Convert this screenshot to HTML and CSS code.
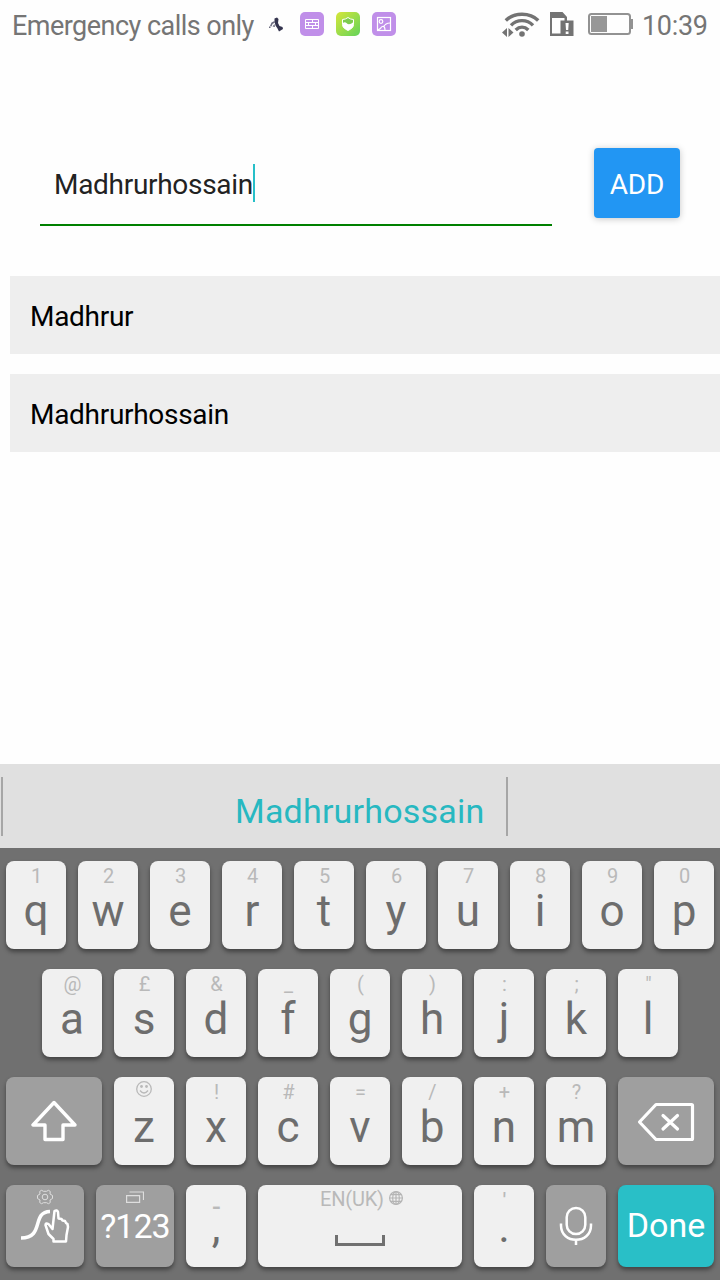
FILE: index.html
```html
<!DOCTYPE html>
<html lang="en">
<head>
<meta charset="utf-8">
<title>Names</title>
<link rel="stylesheet" href="styles.css">
</head>
<body>
<div class="screen">
  <header class="status">
    <span class="carrier">Emergency calls only</span>
    <svg class="n-runner" width="14" height="16" viewBox="0 0 14 16"><path d="M5.500 1.500L8 .5l1.500 1.500-.5 4 1.500 3 3 1 .5 2-4 2.500-1.500-3-2-3-1-4z" fill="#34344e"/><path d="M1 9l1.500-3.500L5.500 4l.5 1.500-2.500 1.500-1 2.500zM5.500 7l.5 3-2.500-.5zM0 9.500h1.500v1.500H0z" fill="#6c6c80"/></svg>
    <svg class="n-app" width="24" height="24" viewBox="0 0 24 24"><rect width="24" height="24" rx="5" fill="#c08fe9"/><path d="M5.500 7.500h13v9h-13zM5.500 10.500h13M5.500 13.500h13M12.500 7.500v3M8.500 10.500v3M15.500 10.500v3M12.500 13.500v3" fill="none" stroke="#fff"/></svg>
    <svg class="n-app" width="24" height="24" viewBox="0 0 24 24"><defs><linearGradient id="lime" x1="0" y1="0" x2="1" y2="1"><stop offset="0" stop-color="#d6e63b"/><stop offset="1" stop-color="#62d35a"/></linearGradient></defs><rect width="24" height="24" rx="5" fill="url(#lime)"/><path d="M6.500 7.500q3 0 5.500-2 2.500 2 5.500 2v5c0 3-2.500 4.500-5.500 6-3-1.500-5.500-3-5.500-6z" fill="#7dcc50" stroke="#fff"/><path d="M6.500 11.500q2-2 4-.5 2.500 3 7-1v2.500c0 3-2.500 4.500-5.500 6-3-1.500-5.500-3-5.500-6z" fill="#fff"/></svg>
    <svg class="n-app" width="24" height="24" viewBox="0 0 24 24"><rect width="24" height="24" rx="5" fill="#c08fe9"/><g fill="none" stroke="#fff" stroke-width="1.200"><rect x="5.500" y="5.500" width="13" height="13"/><circle cx="9" cy="9.500" r="1.800"/><path d="M6 17.500c3 0 2.500-2.500 4.500-3s2.500 1.500 2.500 4M11.500 15c1.500-3 3.500-4 6.500-4"/></g></svg>
    <svg class="wifi" width="38" height="27" viewBox="0 0 38 27"><g fill="none" stroke="#737373" stroke-width="3.400"><path d="M3.800 8.500C12 .2 28 .2 36.200 8.500"/><path d="M9 13.300C15 7 25 7 31 13.300"/><path d="M13.700 18C17.500 14.300 22.500 14.300 26.300 18"/></g><circle cx="20" cy="22" r="2.800" fill="#737373"/><path d="M0 20.500l5-4.500v9zM11.500 20.500l-5-4.500v9z" fill="#737373"/></svg>
    <svg class="sim" width="25" height="25" viewBox="0 0 25 25"><path d="M1 0h12.500L18 5v3.500h6.500V24H1z" fill="#737373"/><path d="M3 6h12.500v2.500h-4V21.500H3z" fill="#fefefe"/><path d="M16.500 11h3.200l-.5 7h-2.200zM16.700 19.500h2.800v2.500h-2.800z" fill="#fff"/></svg>
    <svg class="battery" width="46" height="23" viewBox="0 0 46 23"><rect x="1" y="1" width="41" height="20" rx="2.500" fill="none" stroke="#929292" stroke-width="2"/><path d="M3 3h16v16H3z" fill="#979797"/><path d="M43 6h2v10h-2z" fill="#929292"/></svg>
    <time class="clock">10:39</time>
  </header>

  <section class="entry">
    <div class="field"><span>Madhrurhossain</span><i class="caret"></i></div>
    <button class="add" type="button">ADD</button>
  </section>

  <ul class="names">
    <li>Madhrur</li>
    <li>Madhrurhossain</li>
  </ul>

  <div class="suggest">
    <i class="divider"></i>
    <span class="word">Madhrurhossain</span>
    <i class="divider"></i>
  </div>

  <div class="keyboard">
    <div class="row">
      <div class="key"><small>1</small><b>q</b></div>
      <div class="key"><small>2</small><b>w</b></div>
      <div class="key"><small>3</small><b>e</b></div>
      <div class="key"><small>4</small><b>r</b></div>
      <div class="key"><small>5</small><b>t</b></div>
      <div class="key"><small>6</small><b>y</b></div>
      <div class="key"><small>7</small><b>u</b></div>
      <div class="key"><small>8</small><b>i</b></div>
      <div class="key"><small>9</small><b>o</b></div>
      <div class="key"><small>0</small><b>p</b></div>
    </div>
    <div class="row">
      <div class="key"><small>@</small><b>a</b></div>
      <div class="key"><small>£</small><b>s</b></div>
      <div class="key"><small>&amp;</small><b>d</b></div>
      <div class="key"><small>_</small><b>f</b></div>
      <div class="key"><small>(</small><b>g</b></div>
      <div class="key"><small>)</small><b>h</b></div>
      <div class="key"><small>:</small><b>j</b></div>
      <div class="key"><small>;</small><b>k</b></div>
      <div class="key"><small>"</small><b>l</b></div>
    </div>
    <div class="row">
      <div class="key fn wide"><svg class="shift" width="46" height="42" viewBox="0 0 46 42"><path d="M23 2.500L2 25h12V39.500h18V25h12z" fill="none" stroke="#fff" stroke-width="3.400" stroke-linejoin="round"/></svg></div>
      <div class="key"><svg class="smile" width="16" height="16" viewBox="0 0 16 16"><g fill="none" stroke="#b9b9b9" stroke-width="1.300"><circle cx="8" cy="8" r="7.300"/><path d="M4 9.500q4 5 8 0"/></g><circle cx="5.500" cy="5.500" r="1.400" fill="#b9b9b9"/><circle cx="10.500" cy="5.500" r="1.400" fill="#b9b9b9"/></svg><b>z</b></div>
      <div class="key"><small>!</small><b>x</b></div>
      <div class="key"><small>#</small><b>c</b></div>
      <div class="key"><small>=</small><b>v</b></div>
      <div class="key"><small>/</small><b>b</b></div>
      <div class="key"><small>+</small><b>n</b></div>
      <div class="key"><small>?</small><b>m</b></div>
      <div class="key fn wide"><svg class="erase" width="58" height="40" viewBox="0 0 58 40"><g fill="none" stroke="#fff" stroke-width="3.200" stroke-linejoin="round" stroke-linecap="round"><path d="M2.500 20L19 2.500H54.500q1 0 1 1V36.500q0 1-1 1H19z"/><path d="M26 13.500L40.500 27M40.500 13.500L26 27"/></g></svg></div>
    </div>
    <div class="row last">
      <div class="key fn mid"><svg class="swipe" width="50" height="56" viewBox="0 0 50 56"><g transform="translate(24 9)" fill="none" stroke="#dedede"><path d="M-3.500-6.700L-1.500-5.700H1.500L3.500-6.700 5.300-5.500 5-3 7.500-1.500V1.500L5 3 5.300 5.500 3.500 6.700 1.500 5.700H-1.500L-3.500 6.700-5.300 5.500-5 3-7.500 1.500V-1.500L-5-3-5.300-5.500z" stroke-linejoin="round"/><circle r="2.800"/></g><path d="M0 50C24 50 10 24 29 23.500" fill="none" stroke="#fff" stroke-width="3.500"/><path d="M33.500 23q2.500-1.500 3.500 1l.5 6.500 3 .5 1 1.500 2.500.5 1 2 1.500 1 .5 3-1.500 8-.5 6.500H32.500V51l-5-5-3-9q0-2.500 3-1l4 5z" fill="#9f9f9f" stroke="#fff" stroke-width="2.500" stroke-linejoin="round"/></svg></div>
      <div class="key fn mid"><svg class="windows" width="18" height="12" viewBox="0 0 18 12"><path d="M.6 4.600h13v6.800H.6zM3.500 1h14v8" fill="none" stroke="#dedede" stroke-width="1.200"/></svg><b class="label sym">?123</b></div>
      <div class="key low dash"><small>-</small><b>,</b></div>
      <div class="key space"><small>EN(UK)<svg class="globe" width="14" height="14" viewBox="0 0 14 14"><g fill="none" stroke="#b5b5b5" stroke-width="1.200"><circle cx="7" cy="7" r="6.400"/><ellipse cx="7" cy="7" rx="3.300" ry="6.400"/><path d="M7 .5v13M.5 7h13M1.500 3.700h11M1.500 10.300h11"/></g></svg></small><i class="bar"></i></div>
      <div class="key low tick"><small>'</small><b>.</b></div>
      <div class="key fn"><svg class="mic" width="34" height="40" viewBox="0 0 34 40"><g fill="none" stroke="#fff" stroke-width="2.500"><rect x="7.700" y="2" width="18.600" height="26" rx="9.300"/><path d="M2 17.500v2C2 38.500 32 38.500 32 19.500v-2M17 33.500v5.500"/></g></svg></div>
      <div class="key fn wide done"><b class="label">Done</b></div>
    </div>
  </div>
</div>
</body>
</html>
```

FILE: styles.css
```css
* { box-sizing: border-box; }
body { margin: 0; background: #fefefe; font-family: Roboto, "Liberation Sans", sans-serif; }
.screen { display: flex; flex-direction: column; width: 720px; height: 1280px; overflow: hidden; }
svg { display: block; flex: none; }

.status { display: flex; align-items: flex-start; height: 48px; padding: 12px 12px 0; color: #757575; }
.carrier { width: 257px; font-size: 27px; line-height: 28px; letter-spacing: -.53px; white-space: nowrap; }
.n-runner { margin-top: 5px; }
.n-app { margin-left: 12px; }
.n-runner + .n-app { margin-left: 17px; }
.wifi { margin-left: 106px; }
.sim { margin-left: 9px; }
.battery { margin: 1px 0 0 14px; }
.clock { margin-left: 8px; font-size: 27px; line-height: 28px; letter-spacing: -.3px; }

.entry { display: flex; justify-content: space-between; height: 170px; margin-top: 58px; padding: 42px 40px 0; }
.field { display: flex; align-items: flex-start; width: 512px; height: 78px; padding: 16px 0 0 14px; border-bottom: 2px solid #008000; color: #222; font-size: 28px; line-height: 38px; letter-spacing: -.3px; }
.field span { margin-top: 2px; }
.caret { width: 2px; height: 38px; background: #27bfc8; }
.add { width: 86px; height: 70px; padding: 2px 0 0; border: 0; border-radius: 4px; background: #2296f3; box-shadow: 0 1px 7px rgba(0, 0, 0, .22); color: #fff; font: 28px Roboto, sans-serif; letter-spacing: -.2px; }

.names { display: flex; flex-direction: column; gap: 20px; margin: 0; padding: 0 0 0 10px; list-style: none; }
.names li { height: 78px; padding: 3px 20px 0; background: #eee; color: #000; font-size: 28px; line-height: 76px; letter-spacing: -.3px; }

.suggest { display: flex; height: 84px; margin-top: auto; padding: 13px 0 0 1px; background: #e0e0e0; }
.divider { width: 2px; height: 59px; background: #a6a6a6; }
.word { width: 503px; padding-left: 232px; color: #27b8c1; font-size: 34px; line-height: 68px; letter-spacing: .2px; }

.keyboard { display: flex; flex-direction: column; gap: 20px; height: 432px; padding: 13px 6px 0; background: #707070; }
.row { display: flex; justify-content: center; gap: 12px; height: 88px; }
.key { display: flex; flex-direction: column; align-items: center; width: 60px; border-radius: 8px; background: #f0f0f0; box-shadow: 0 3px 4px rgba(0, 0, 0, .4); color: #6d6d6d; }
.key small { height: 30px; padding-left: 1px; color: #b9b9b9; font-size: 20px; line-height: 30px; }
.key b { font-size: 44px; font-weight: 400; line-height: 40px; }
.fn { background: #9f9f9f; color: #fff; }
.wide { width: 96px; }
.mid { width: 78px; }
.last { height: 82px; }
.shift { margin-top: 23px; }
.smile { margin: 4px 0 10px; }
.erase { margin: 25px 0 0; }
.swipe { margin: 3px 0 0 1px; }
.windows { margin: 6px 0 4px; }
.key .label { font-size: 34px; line-height: 38px; }
.key .sym { letter-spacing: -1px; }
.key.low b { line-height: 24px; }
.key.dash small { padding: 7px 0 0 1px; font-size: 26px; font-weight: 500; }
.tick small { font-weight: 500; }
.space { width: 204px; }
.space small { display: flex; gap: 5px; padding-left: 3px; line-height: 29px; letter-spacing: -.2px; }
.globe { margin-top: 6px; }
.bar { width: 50px; height: 11px; margin-top: 20px; border: 3px solid #707070; border-top: 0; }
.mic { margin-top: 21px; }
.done { padding-top: 21px; background: #29bfc7; }
```
